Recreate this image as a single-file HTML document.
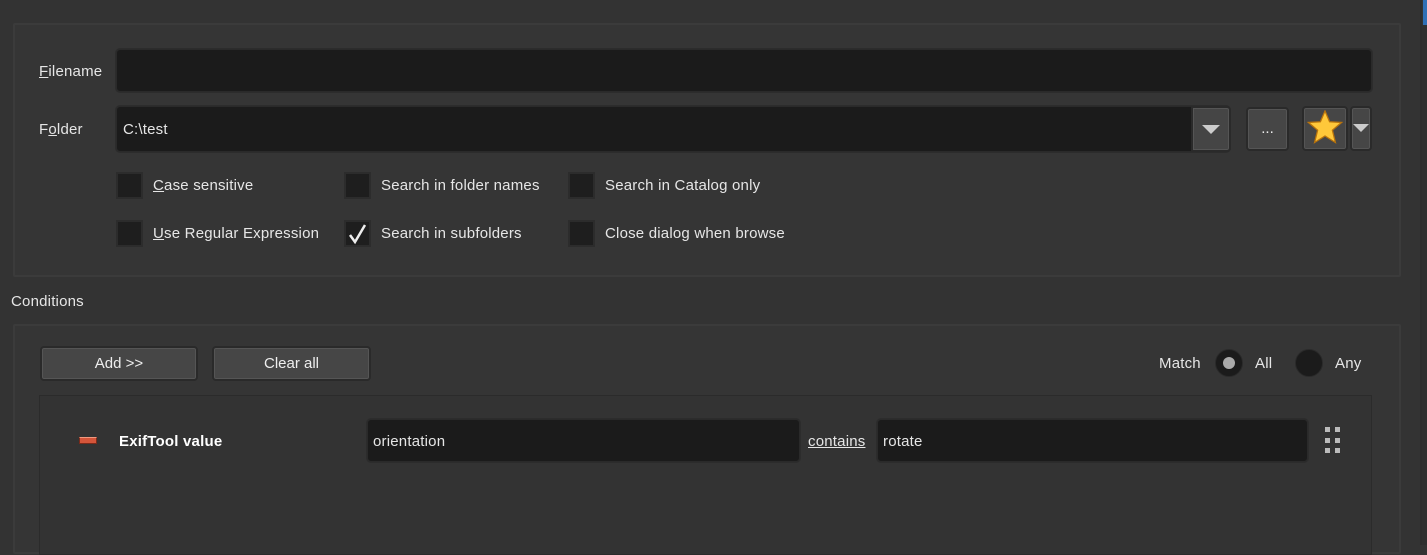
<!DOCTYPE html><html><head><style>
body{margin:0;width:1427px;height:545px;background:#333;font-family:"Liberation Sans",sans-serif;font-size:15px;color:#e6e6e6;position:relative;overflow:hidden;-webkit-font-smoothing:antialiased}
div,span{position:absolute;box-sizing:border-box}
.panel{border:2px solid #3b3b3b;background:#353535;border-radius:2px}
.inp{background:#1b1b1b;border:1px solid #2a2a2a;border-radius:4px;box-shadow:0 0 0 1px #2c2c2c}
.btn{background:#464646;border:2px solid #2a2a2a;border-radius:4px;box-shadow:inset 0 0 0 1px #555;text-align:center;color:#eee}
.cb{width:27px;height:27px;background:#1e1e1e;border:2px solid #2c2c2c}
.t{white-space:nowrap;line-height:18px;letter-spacing:0.2px}
u{text-decoration:underline}
</style></head><body>
<div style="left:1420px;top:0;width:2px;height:545px;background:#2d2d2d"></div>
<div style="left:1423px;top:0;width:4px;height:25px;background:#2f6fb5"></div>
<div style="left:1422px;top:25px;width:5px;height:520px;background:#2f2f2f"></div>

<div class="panel" style="left:13px;top:23px;width:1388px;height:254px"></div>
<div class="t" style="left:39px;top:63px"><u>F</u>ilename</div>
<div class="inp" style="left:116px;top:49px;width:1256px;height:43px"></div>
<div class="t" style="left:39px;top:121px">F<u>o</u>lder</div>
<div class="inp" style="left:116px;top:106px;width:1114px;height:46px"></div>
<div class="t" style="left:123px;top:121px">C:\test</div>
<div style="left:1191px;top:106px;width:40px;height:46px;background:#454545;border:2px solid #2a2a2a;border-radius:0 4px 4px 0;box-shadow:inset 0 0 0 1px #555"></div>
<div style="left:1202px;top:125px;width:0;height:0;border-left:9px solid transparent;border-right:9px solid transparent;border-top:9px solid #ccc"></div>
<div class="btn" style="left:1246px;top:107px;width:43px;height:44px;line-height:40px">...</div>
<div class="btn" style="left:1302px;top:106px;width:46px;height:45px"></div>
<svg style="position:absolute;left:1307px;top:110px" width="36" height="34" viewBox="0 0 36 34"><polygon points="18,1 22.6,11.8 34.5,12.5 25.4,20.2 28.4,32.5 18,26 7.6,32.5 10.6,20.2 1.5,12.5 13.4,11.8" fill="#ffc83a" stroke="#b8730c" stroke-width="1.3"/></svg>
<div class="btn" style="left:1350px;top:106px;width:22px;height:45px"></div>
<div style="left:1353px;top:124px;width:0;height:0;border-left:8px solid transparent;border-right:8px solid transparent;border-top:8px solid #ccc"></div>

<div class="cb" style="left:116px;top:172px"></div><div class="t" style="left:153px;top:177px"><u>C</u>ase sensitive</div>
<div class="cb" style="left:344px;top:172px"></div><div class="t" style="left:381px;top:177px">Search in folder names</div>
<div class="cb" style="left:568px;top:172px"></div><div class="t" style="left:605px;top:177px">Search in Catalog only</div>
<div class="cb" style="left:116px;top:220px"></div><div class="t" style="left:153px;top:225px"><u>U</u>se Regular Expression</div>
<div class="cb" style="left:344px;top:220px"></div>
<svg style="position:absolute;left:346px;top:222px" width="24" height="24"><path d="M4 13 L9 20 L19 3" fill="none" stroke="#eee" stroke-width="2.5"/></svg>
<div class="t" style="left:381px;top:225px">Search in subfolders</div>
<div class="cb" style="left:568px;top:220px"></div><div class="t" style="left:605px;top:225px">Close dialog when browse</div>

<div class="t" style="left:11px;top:293px">Conditions</div>
<div class="panel" style="left:13px;top:324px;width:1388px;height:230px"></div>
<div class="btn" style="left:40px;top:346px;width:158px;height:35px;line-height:31px">Add &gt;&gt;</div>
<div class="btn" style="left:212px;top:346px;width:159px;height:35px;line-height:31px">Clear all</div>
<div class="t" style="left:1159px;top:355px">Match</div>
<div style="left:1215px;top:349px;width:28px;height:28px;border-radius:50%;background:#1b1b1b;border:1px solid #2a2a2a"></div>
<div style="left:1223px;top:357px;width:12px;height:12px;border-radius:50%;background:#aaa"></div>
<div class="t" style="left:1255px;top:355px">All</div>
<div style="left:1295px;top:349px;width:28px;height:28px;border-radius:50%;background:#1b1b1b;border:1px solid #2a2a2a"></div>
<div class="t" style="left:1335px;top:355px">Any</div>

<div style="left:39px;top:395px;width:1333px;height:160px;border:1px solid #2b2b2b;background:#333"></div>
<div style="left:79px;top:437px;width:18px;height:7px;background:#d4553a;border:1px solid #7a2a1a;border-top-color:#f09a80"></div>
<div class="t" style="left:119px;top:433px;font-weight:bold;color:#fff">ExifTool value</div>
<div class="inp" style="left:367px;top:419px;width:433px;height:43px"></div>
<div class="t" style="left:373px;top:433px">orientation</div>
<div class="t" style="left:808px;top:433px"><u>contains</u></div>
<div class="inp" style="left:877px;top:419px;width:431px;height:43px"></div>
<div class="t" style="left:883px;top:433px">rotate</div>
<svg style="position:absolute;left:1324px;top:427px" width="18" height="28"><g fill="#bbb"><rect x="1" y="0" width="5" height="5"/><rect x="11" y="0" width="5" height="5"/><rect x="1" y="11" width="5" height="5"/><rect x="11" y="11" width="5" height="5"/><rect x="1" y="21" width="5" height="5"/><rect x="11" y="21" width="5" height="5"/></g></svg>
</body></html>
